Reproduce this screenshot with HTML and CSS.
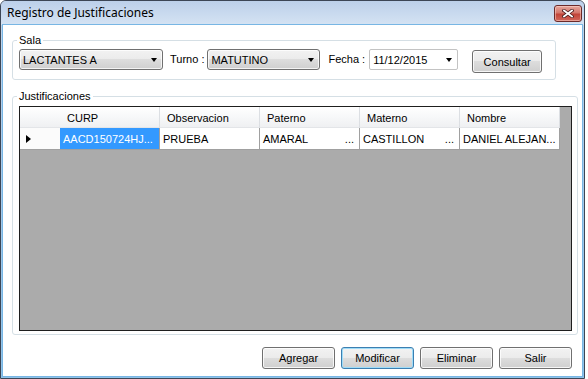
FILE: index.html
```html
<!DOCTYPE html>
<html lang="es">
<head>
    <meta charset="UTF-8">
    <title>Registro de Justificaciones</title>
    <link rel="stylesheet" href="styles.css">
</head>
<body>

<div class="window">
    <div class="titlebar">
        <span class="title">Registro de Justificaciones</span>
        <button class="close-btn" title="Cerrar">
            <svg width="12" height="9" viewBox="0 0 12 9">
                <path d="M2 1.5 L10 7.5 M10 1.5 L2 7.5" stroke="#4a1c1c" stroke-width="3.4" stroke-linecap="square"/>
                <path d="M2 1.5 L10 7.5 M10 1.5 L2 7.5" stroke="#ffffff" stroke-width="1.8" stroke-linecap="square"/>
            </svg>
        </button>
    </div>

    <div class="client">
        <fieldset class="group group-sala">
            <legend>Sala</legend>
            <div class="filter-row">
                <div class="combo combo-sala"><span>LACTANTES A</span><span class="arrow"></span></div>
                <label class="lbl lbl-turno">Turno :</label>
                <div class="combo combo-turno"><span>MATUTINO</span><span class="arrow"></span></div>
                <label class="lbl lbl-fecha">Fecha :</label>
                <div class="datepicker"><span>11/12/2015</span><span class="arrow"></span></div>
                <button class="btn btn-consultar">Consultar</button>
            </div>
        </fieldset>

        <fieldset class="group group-just">
            <legend>Justificaciones</legend>
            <div class="grid">
                <div class="grid-table">
                    <div class="hcell corner"></div>
                    <div class="hcell">CURP</div>
                    <div class="hcell">Observacion</div>
                    <div class="hcell">Paterno</div>
                    <div class="hcell">Materno</div>
                    <div class="hcell">Nombre</div>

                    <div class="rowhead"><span class="row-arrow"></span></div>
                    <div class="cell selected">AACD150724HJ...</div>
                    <div class="cell">PRUEBA</div>
                    <div class="cell"><span>AMARAL</span><span class="dots">...</span></div>
                    <div class="cell"><span>CASTILLON</span><span class="dots">...</span></div>
                    <div class="cell">DANIEL ALEJAN...</div>
                </div>
            </div>
        </fieldset>

        <div class="actions">
            <button class="btn">Agregar</button>
            <button class="btn btn-default">Modificar</button>
            <button class="btn">Eliminar</button>
            <button class="btn">Salir</button>
        </div>
    </div>
</div>

</body>
</html>
```

FILE: styles.css
```css
* {
    box-sizing: border-box;
}

body {
    margin: 0;
    width: 588px;
    height: 379px;
    overflow: hidden;
    background-color: #ffffff;
    font-family: "Liberation Sans", Arial, sans-serif;
    font-size: 11px;
    color: #000000;
}

/* Ventana */
.window {
    width: 585px;
    height: 379px;
    border: 1px solid #3c4656;
    border-radius: 6px 6px 0 0;
    background: linear-gradient(#c3d6ec, #aacbea 40%, #8fc3ea);
    display: flex;
    flex-direction: column;
    overflow: hidden;
}

.titlebar {
    height: 24px;
    flex: none;
    display: flex;
    justify-content: space-between;
    align-items: flex-start;
    padding: 0 2px 0 6px;
    background: linear-gradient(#bcd0ea, #d5e3f3);
}

.title {
    font-family: "Noto Sans", "Open Sans", sans-serif;
    font-size: 12px;
    line-height: 24px;
}

.close-btn {
    width: 28px;
    height: 17px;
    margin-top: 4px;
    padding: 0;
    border: 1px solid #6b2a2a;
    border-radius: 3px;
    background: linear-gradient(#e6a79d, #d4776c 45%, #c24438 55%, #d2685c);
    box-shadow: inset 0 0 0 1px rgba(255, 220, 210, 0.5);
    display: flex;
    align-items: center;
    justify-content: center;
}

.client {
    flex: 1;
    margin: 0 2px 2px 2px;
    background-color: #ffffff;
    box-shadow: 0 0 0 1px #78b6e4;
    display: flex;
    flex-direction: column;
    align-items: flex-start;
}

/* Grupos */
.group {
    margin: 0;
    border: 1px solid #d5dfe5;
    border-radius: 3px;
    min-width: 0;
}

.group legend {
    padding: 0 2px;
    margin-left: -2px;
    line-height: 13px;
    font-size: 11px;
}

.group-sala {
    width: 544px;
    margin: 9px 0 0 9px;
    padding: 2px 0 6px 6px;
}

.group-just {
    align-self: stretch;
    margin: 10px 4px 0 9px;
    padding: 3px 5px 3px 6px;
}

/* Filtros */
.filter-row {
    display: flex;
    align-items: flex-start;
}

.lbl {
    line-height: 21px;
}

.lbl-turno {
    margin: 0 3px 0 7px;
}

.lbl-fecha {
    margin: 0 4px 0 8px;
}

.combo {
    height: 21px;
    border: 1px solid #707070;
    border-radius: 3px;
    background: linear-gradient(#f2f2f2 0%, #ebebeb 50%, #dddddd 50%, #cfcfcf 100%);
    box-shadow: inset 0 0 0 1px rgba(255, 255, 255, 0.75);
    display: flex;
    align-items: center;
    justify-content: space-between;
    padding: 0 5px 0 3px;
}

.combo-sala {
    width: 144px;
}

.combo-turno {
    width: 113px;
}

.datepicker {
    width: 89px;
    height: 21px;
    border: 1px solid #c3c3c3;
    border-radius: 2px;
    background-color: #ffffff;
    display: flex;
    align-items: center;
    justify-content: space-between;
    padding: 0 5px 0 3px;
}

.arrow {
    width: 0;
    height: 0;
    border-left: 3.5px solid transparent;
    border-right: 3.5px solid transparent;
    border-top: 4px solid #000000;
    margin-top: 1px;
}

/* Botones */
.btn {
    height: 22px;
    width: 73px;
    padding: 0;
    border: 1px solid #707070;
    border-radius: 3px;
    background: linear-gradient(#f2f2f2 0%, #ebebeb 50%, #dddddd 50%, #cfcfcf 100%);
    box-shadow: inset 0 0 0 1px rgba(255, 255, 255, 0.8);
    font-family: "Liberation Sans", Arial, sans-serif;
    font-size: 11px;
    color: #000000;
}

.btn-consultar {
    width: 70px;
    height: 23px;
    margin: 1px 0 0 14px;
}

.btn-default {
    border-color: #3c7fb1;
    box-shadow: inset 0 0 0 1px #9fdcf8;
}

.actions {
    align-self: stretch;
    display: flex;
    justify-content: flex-end;
    gap: 6px;
    margin-top: 12px;
    padding-right: 10px;
}

/* Rejilla de datos */
.grid {
    width: 553px;
    height: 225px;
    border: 1px solid #1e1e1e;
    background-color: #ababab;
}

.grid-table {
    display: grid;
    grid-template-columns: 40px repeat(5, 100px);
    grid-template-rows: 21px 22px;
}

.hcell {
    background: linear-gradient(#ffffff, #f7f8f9 50%, #eff0f2);
    border-right: 1px solid #dcdfe3;
    border-bottom: 1px solid #e3e5e8;
    padding: 2px 0 0 7px;
    display: flex;
    align-items: center;
}

.hcell.corner {
    border-right: none;
}

.rowhead {
    background-color: #fbfbfb;
    border-bottom: 1px solid #a0a0a0;
    display: flex;
    align-items: center;
    padding-left: 6px;
}

.row-arrow {
    width: 0;
    height: 0;
    border-top: 4.5px solid transparent;
    border-bottom: 4.5px solid transparent;
    border-left: 5px solid #000000;
}

.cell {
    background-color: #ffffff;
    border-right: 1px solid #a0a0a0;
    border-bottom: 1px solid #a0a0a0;
    padding: 0 5px 0 3px;
    display: flex;
    align-items: center;
    justify-content: space-between;
    white-space: nowrap;
    overflow: hidden;
}

.cell.selected {
    background-color: #3399ff;
    color: #ffffff;
}
```
